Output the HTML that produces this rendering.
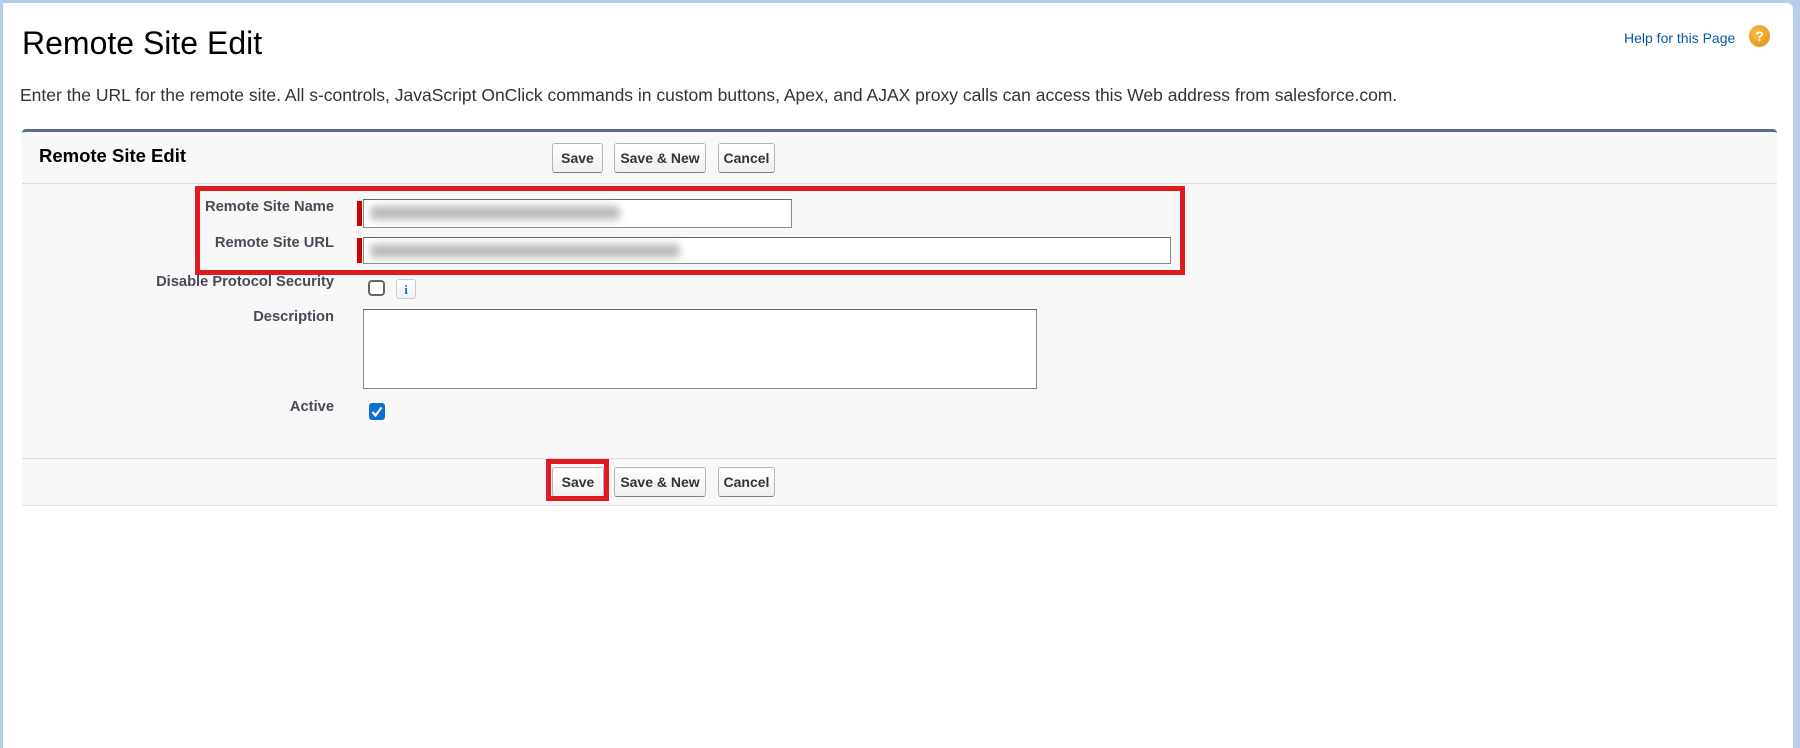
<!DOCTYPE html>
<html><head><meta charset="utf-8"><style>
*{box-sizing:border-box;margin:0;padding:0}
body{width:1800px;height:743px;background:#b4cde8;font-family:"Liberation Sans",Arial,sans-serif;position:relative;overflow:hidden}
.page{position:absolute;left:3px;top:3px;width:1790px;height:745px;background:#fff;border-top-right-radius:6px}
.a{position:absolute}
h1{position:absolute;left:22px;top:25px;font-size:32px;font-weight:normal;color:#000}
.desc{left:20px;top:85px;font-size:17.5px;color:#333;white-space:nowrap}
.help{left:1624px;top:30px;font-size:14px;color:#015ba7}
.q{left:1749px;top:25px;width:21px;height:22px;border-radius:50%;background:radial-gradient(circle at 40% 35%,#f8c04a,#e08a0a);color:#fff;font-size:14px;font-weight:bold;text-align:center;line-height:22px}
.panel{left:22px;top:129px;width:1755px;height:377px;background:#f8f8f8;border-top:3px solid #5b6c8a;border-radius:4px 4px 0 0;border-bottom:1px solid #e0e0e0}
.ptitle{left:39px;top:145px;font-size:18.5px;font-weight:bold;color:#000}
.btn{position:absolute;height:30px;border:1px solid #b5b5b5;border-bottom-color:#7f7f7f;border-radius:3px;background:linear-gradient(#fff,#f0f0f0);font-size:14px;font-weight:bold;color:#333;text-align:center;line-height:28px;white-space:nowrap}
.line{left:22px;height:1px;width:1755px;background:#dcdcdc}
.lbl{position:absolute;right:1466px;font-size:14.7px;font-weight:bold;color:#4a4a56;text-align:right;white-space:nowrap}
.inp{position:absolute;background:#fff;border:1px solid #8a8a8a;border-top-color:#666}
.blur{position:absolute;left:6px;top:6px;height:14px;background:#bbb;filter:blur(4px);border-radius:5px}
.red{position:absolute;border:5px solid #e01b1f}
.rb{position:absolute;left:357px;width:5px;background:#c00}
</style></head><body>
<div class="page"></div>
<h1>Remote Site Edit</h1>
<div class="a help">Help for this Page</div>
<div class="a q">?</div>
<div class="a desc">Enter the URL for the remote site. All s-controls, JavaScript OnClick commands in custom buttons, Apex, and AJAX proxy calls can access this Web address from salesforce.com.</div>
<div class="a panel"></div>
<div class="a ptitle">Remote Site Edit</div>
<div class="btn" style="left:552px;top:143px;width:51px">Save</div>
<div class="btn" style="left:614px;top:143px;width:92px">Save &amp; New</div>
<div class="btn" style="left:718px;top:143px;width:57px">Cancel</div>
<div class="a line" style="top:183px"></div>

<div class="lbl" style="top:199px">Remote Site Name</div>
<div class="rb" style="top:201px;height:25px"></div>
<div class="inp" style="left:363px;top:199px;width:429px;height:29px"><div class="blur" style="width:250px"></div></div>
<div class="lbl" style="top:235px">Remote Site URL</div>
<div class="rb" style="top:238px;height:25px"></div>
<div class="inp" style="left:363px;top:237px;width:808px;height:27px"><div class="blur" style="width:310px"></div></div>
<div class="red" style="left:195px;top:186px;width:990px;height:89px"></div>

<div class="lbl" style="top:274px">Disable Protocol Security</div>
<div class="a" style="left:368px;top:280px;width:17px;height:16px;border:2px solid #666;border-radius:4px;background:#fff"></div>
<div class="a" style="left:396px;top:279px;width:20px;height:20px;border:1px solid #ccc;border-radius:3px;background:linear-gradient(#fff,#eef2f8);color:#1e6ed6;font-size:13px;font-weight:bold;font-family:'Liberation Serif',serif;text-align:center;line-height:19px">i</div>

<div class="lbl" style="top:309px">Description</div>
<div class="inp" style="left:363px;top:309px;width:674px;height:80px"></div>
<div class="lbl" style="top:399px">Active</div>
<div class="a" style="left:369px;top:403px;width:16px;height:17px;border-radius:3px;background:#0b6fd4"><svg width="16" height="17" viewBox="0 0 16 17"><path d="M3.5 9 L6.5 12.5 L12.5 4.5" stroke="#fff" stroke-width="2.2" fill="none"/></svg></div>

<div class="a line" style="top:458px"></div>
<div class="btn" style="left:552px;top:467px;width:52px">Save</div>
<div class="red" style="left:546px;top:459px;width:63px;height:42px"></div>
<div class="btn" style="left:614px;top:467px;width:92px">Save &amp; New</div>
<div class="btn" style="left:718px;top:467px;width:57px">Cancel</div>
</body></html>
